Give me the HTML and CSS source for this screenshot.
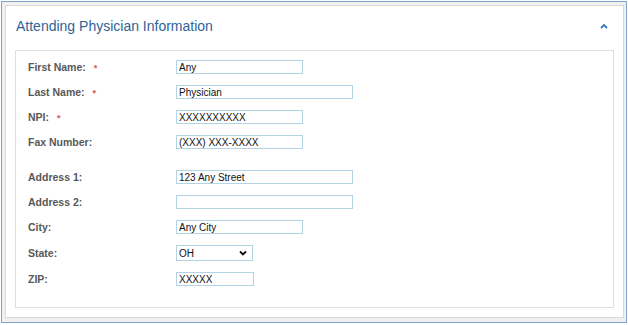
FILE: index.html
```html
<!DOCTYPE html>
<html lang="en">
<head>
  <meta charset="UTF-8">
  <meta name="viewport" content="width=device-width, initial-scale=1.0">
  <title>Attending Physician Information</title>
  <link rel="stylesheet" href="styles.css">
</head>
<body>
  <div class="frame">
    <div class="card">
      <div class="card-header">
        <h2 class="card-title">Attending Physician Information</h2>
        <svg class="collapse-icon" width="8" height="6" viewBox="0 0 8 6">
          <path d="M1 5 L4 2 L7 5" fill="none" stroke="#3a78c0" stroke-width="1.8"/>
        </svg>
      </div>
      <div class="card-body">
        <div class="form-box">
          <div class="field-group">
            <div class="field-row">
              <label class="field-label">First Name: <span class="required">*</span></label>
              <input class="field-input short" type="text" value="Any">
            </div>
            <div class="field-row">
              <label class="field-label">Last Name: <span class="required">*</span></label>
              <input class="field-input long" type="text" value="Physician">
            </div>
            <div class="field-row">
              <label class="field-label">NPI: <span class="required">*</span></label>
              <input class="field-input short" type="text" value="XXXXXXXXXX">
            </div>
            <div class="field-row">
              <label class="field-label">Fax Number:</label>
              <input class="field-input short" type="text" value="(XXX) XXX-XXXX">
            </div>
          </div>
          <div class="field-group">
            <div class="field-row">
              <label class="field-label">Address 1:</label>
              <input class="field-input long" type="text" value="123 Any Street">
            </div>
            <div class="field-row">
              <label class="field-label">Address 2:</label>
              <input class="field-input long" type="text" value="">
            </div>
            <div class="field-row">
              <label class="field-label">City:</label>
              <input class="field-input short" type="text" value="Any City">
            </div>
            <div class="field-row">
              <label class="field-label">State:</label>
              <div class="select-wrap">
                <select class="field-select">
                  <option>OH</option>
                </select>
                <svg class="select-arrow" width="8" height="6" viewBox="0 0 8 6">
                  <path d="M1 1.5 L4 4.5 L7 1.5" fill="none" stroke="#111" stroke-width="1.8"/>
                </svg>
              </div>
            </div>
            <div class="field-row">
              <label class="field-label">ZIP:</label>
              <input class="field-input tiny" type="text" value="XXXXX">
            </div>
          </div>
        </div>
      </div>
    </div>
  </div>
</body>
</html>
```

FILE: styles.css
```css
body {
  margin: 0;
  background-color: #fff;
  font-family: "Liberation Sans", Arial, sans-serif;
}

.frame {
  box-sizing: border-box;
  width: 626px;
  height: 322px;
  margin: 1px 0 0 1px;
  padding: 3px 2px 4px 3px;
  border: 1px solid #7ea3cf;
  background-color: #f0f0f0;
  display: flex;
}

.card {
  flex: 1;
  display: flex;
  flex-direction: column;
  background-color: #fff;
  border: 1px solid #d9d9d9;
}

.card-header {
  height: 44px;
  padding: 0 15px 4px 10px;
  box-sizing: border-box;
  display: flex;
  align-items: center;
  justify-content: space-between;
}

.card-title {
  margin: 0;
  font-size: 14px;
  font-weight: normal;
  color: #2f6497;
}

.card-body {
  flex: 1;
  display: flex;
  padding: 0 9px 9px 9px;
}

.form-box {
  flex: 1;
  border: 1px solid #dedede;
  padding: 9px 12px;
  display: flex;
  flex-direction: column;
  gap: 21px;
}

.field-group {
  display: flex;
  flex-direction: column;
  gap: 11px;
}

.field-row {
  display: flex;
  align-items: center;
  min-height: 14px;
}

.field-label {
  width: 148px;
  flex-shrink: 0;
  font-size: 10.5px;
  font-weight: bold;
  color: #585858;
}

.required {
  color: #d9534f;
  margin-left: 5px;
  font-size: 9px;
}

.field-input {
  box-sizing: border-box;
  height: 14px;
  padding: 0 2px;
  margin: 0;
  border: 1px solid #b3d4e4;
  font-family: "Liberation Sans", Arial, sans-serif;
  font-size: 10px;
  color: #111;
  outline: none;
}

.field-input.short {
  width: 127px;
}

.field-input.long {
  width: 177px;
}

.field-input.tiny {
  width: 78px;
}

.select-wrap {
  position: relative;
  display: flex;
}

.field-select {
  box-sizing: border-box;
  width: 77px;
  height: 16px;
  margin: 0;
  padding: 0 2px;
  border: 1px solid #b3d4e4;
  border-radius: 0;
  background-color: #fff;
  appearance: none;
  -webkit-appearance: none;
  font-family: "Liberation Sans", Arial, sans-serif;
  font-size: 10px;
  color: #111;
}

.select-arrow {
  position: absolute;
  right: 6px;
  top: 5px;
  pointer-events: none;
}
```
